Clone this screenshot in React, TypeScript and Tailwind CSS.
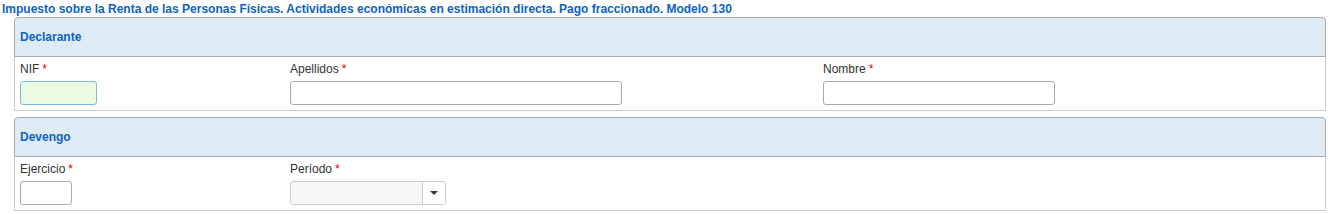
import React from "react";

const Req = () => <span className="text-[#e00000] ml-[3px]">*</span>;

type FieldProps = { label: string; children: React.ReactNode; className?: string };

const Field = ({ label, children, className }: FieldProps) => (
  <div className={className}>
    <label className="block h-[14px] leading-[14px] text-[#333333] mb-[5px]">
      {label}
      <Req />
    </label>
    {children}
  </div>
);

const Panel = ({ title, children }: { title: string; children: React.ReactNode }) => (
  <div className="w-[1312px]">
    <div className="h-[40px] bg-[#dfebf4] border border-[#a9adb1] rounded-t-[4px] flex items-center px-[5px]">
      <span className="font-bold text-[#0b63c5]">{title}</span>
    </div>
    <div className="border border-t-0 border-[#cccccc] bg-white pt-[5px] pb-[5px] px-[5px] flex">
      {children}
    </div>
  </div>
);

export default function App() {
  return (
    <div className="w-[1338px] h-[214px] bg-white text-[12px] font-['Liberation_Sans',Arial,sans-serif]">
      <div className="h-[17px] pl-[2px] pt-[2px] leading-[14px] font-bold text-[#0b63c5]">
        Impuesto sobre la Renta de las Personas Físicas. Actividades económicas en estimación directa. Pago
        fraccionado. Modelo 130
      </div>

      <div className="ml-[14px] flex flex-col gap-[6px]">
        <Panel title="Declarante">
          <Field label="NIF" className="w-[270px]">
            <input className="block w-[77px] h-[24px] rounded-[3px] border border-[#80b7ea] bg-[#eafbe2] outline-none" />
          </Field>
          <Field label="Apellidos" className="w-[533px]">
            <input className="block w-[332px] h-[24px] rounded-[3px] border border-[#a9a9a9] bg-white outline-none" />
          </Field>
          <Field label="Nombre">
            <input className="block w-[232px] h-[24px] rounded-[3px] border border-[#a9a9a9] bg-white outline-none" />
          </Field>
        </Panel>

        <Panel title="Devengo">
          <Field label="Ejercicio" className="w-[270px]">
            <input className="block w-[52px] h-[24px] rounded-[3px] border border-[#a9a9a9] bg-white outline-none" />
          </Field>
          <Field label="Período">
            <div className="flex w-[156px] h-[24px] rounded-[3px] border border-[#cccccc] bg-[#f6f6f6] overflow-hidden">
              <div className="flex-1" />
              <div className="w-[23px] border-l border-[#cccccc] bg-white flex items-center justify-center">
                <svg width="8" height="4" viewBox="0 0 8 4">
                  <path d="M0 0 L8 0 L4 4 Z" fill="#333344" />
                </svg>
              </div>
            </div>
          </Field>
        </Panel>
      </div>
    </div>
  );
}
